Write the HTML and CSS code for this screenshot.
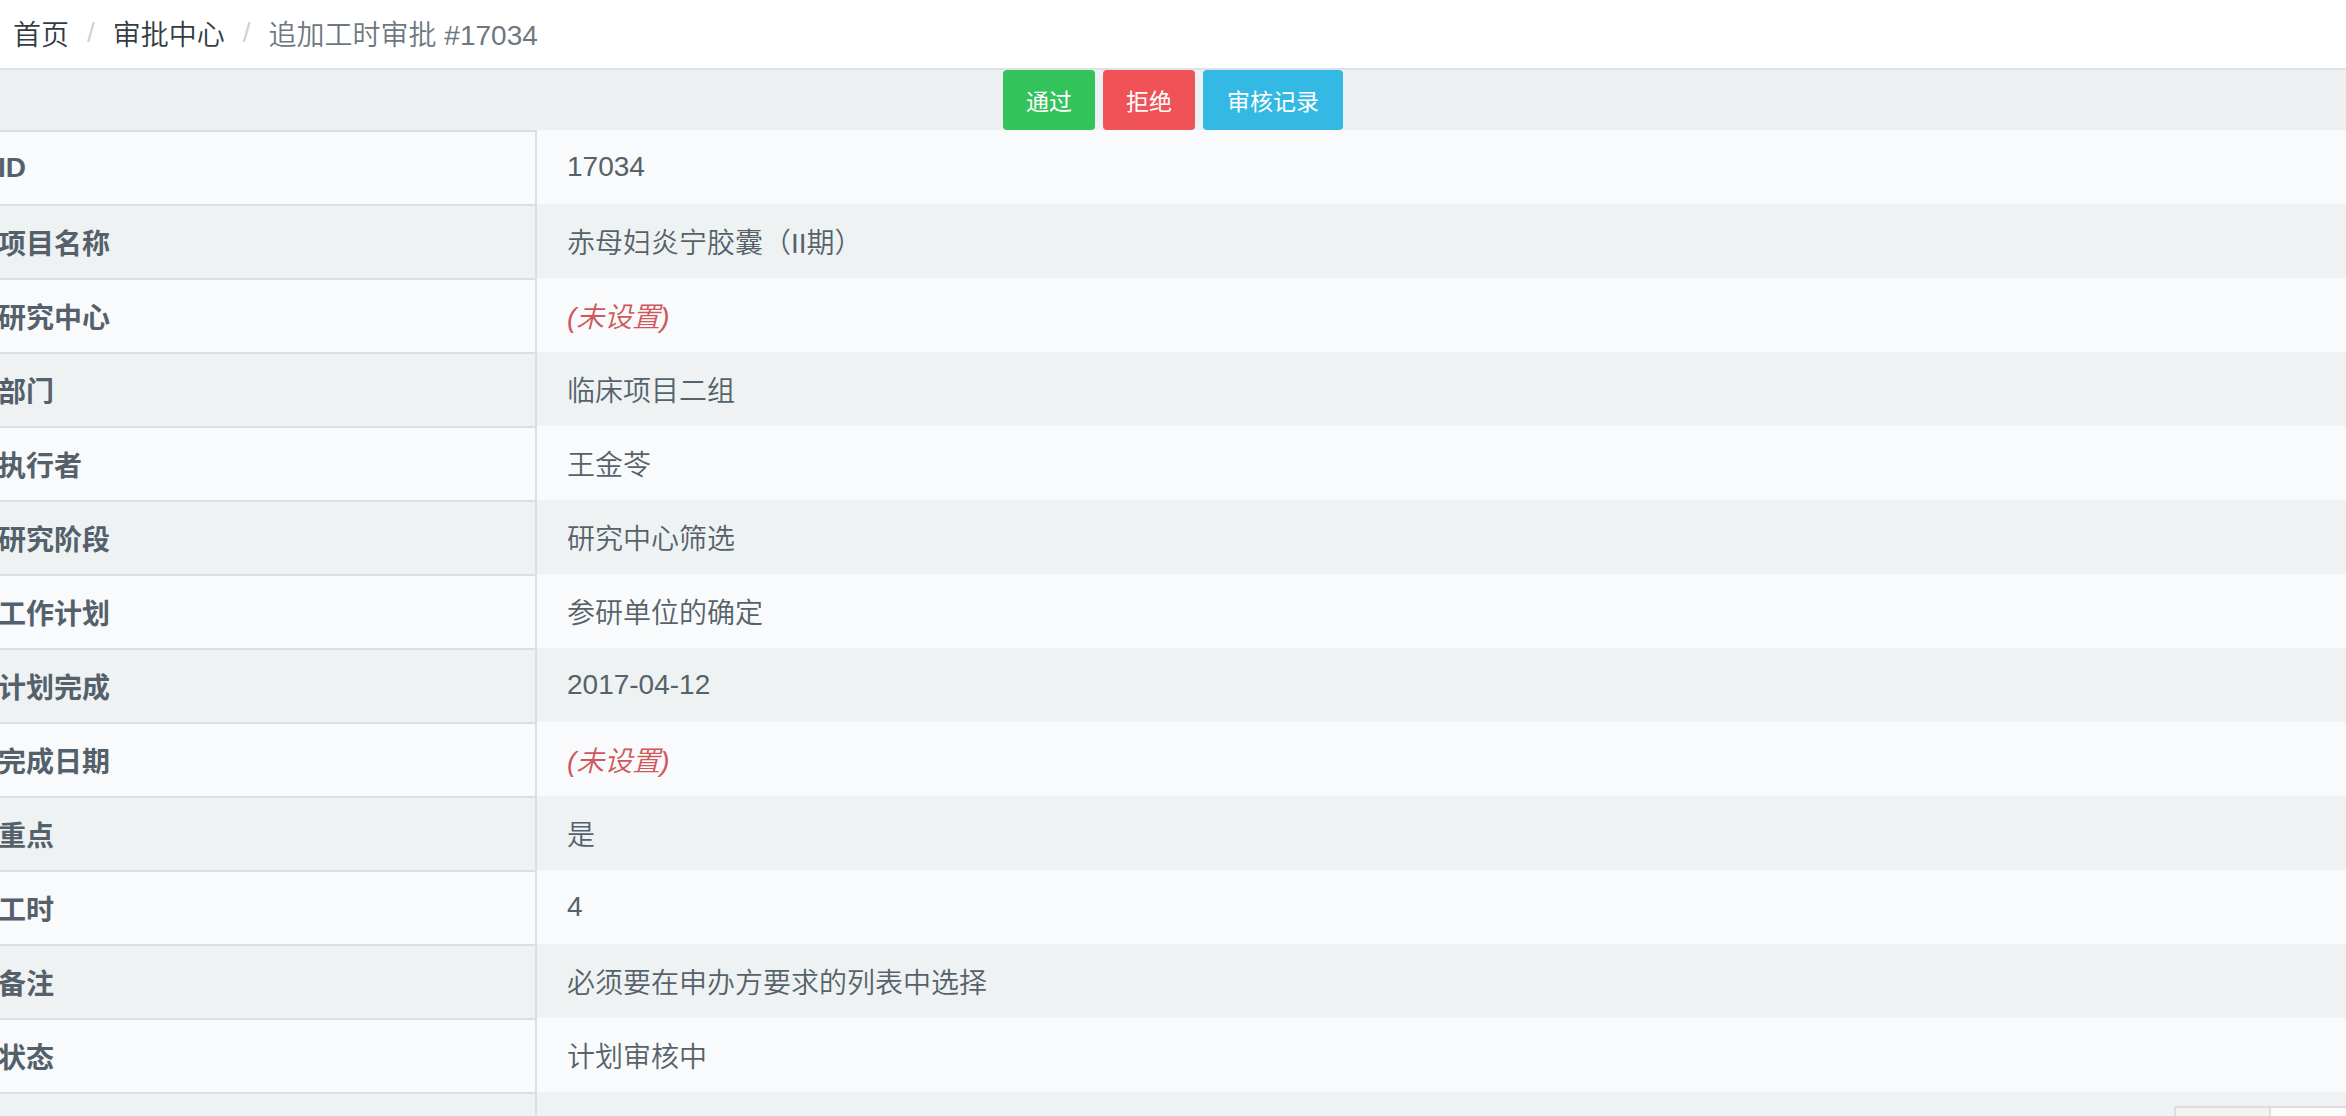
FILE: index.html
```html
<!DOCTYPE html>
<html lang="zh-CN">
<head>
<meta charset="utf-8">
<title>追加工时审批 #17034</title>
<link rel="stylesheet" href="styles.css">
</head>
<body>
<header class="topbar">
  <nav class="breadcrumb">
    <a class="crumb" href="#">首页</a>
    <span class="sep">/</span>
    <a class="crumb" href="#">审批中心</a>
    <span class="sep">/</span>
    <span class="crumb active">追加工时审批 #17034</span>
  </nav>
</header>
<div class="toolbar">
  <button class="btn btn-success">通过</button>
  <button class="btn btn-danger">拒绝</button>
  <button class="btn btn-info">审核记录</button>
</div>
<div class="detail">
  <div class="row"><div class="th">ID</div><div class="td">17034</div></div>
  <div class="row"><div class="th">项目名称</div><div class="td">赤母妇炎宁胶囊（II期）</div></div>
  <div class="row"><div class="th">研究中心</div><div class="td"><span class="unset">(未设置)</span></div></div>
  <div class="row"><div class="th">部门</div><div class="td">临床项目二组</div></div>
  <div class="row"><div class="th">执行者</div><div class="td">王金苓</div></div>
  <div class="row"><div class="th">研究阶段</div><div class="td">研究中心筛选</div></div>
  <div class="row"><div class="th">工作计划</div><div class="td">参研单位的确定</div></div>
  <div class="row"><div class="th">计划完成</div><div class="td">2017-04-12</div></div>
  <div class="row"><div class="th">完成日期</div><div class="td"><span class="unset">(未设置)</span></div></div>
  <div class="row"><div class="th">重点</div><div class="td">是</div></div>
  <div class="row"><div class="th">工时</div><div class="td">4</div></div>
  <div class="row"><div class="th">备注</div><div class="td">必须要在申办方要求的列表中选择</div></div>
  <div class="row"><div class="th">状态</div><div class="td">计划审核中</div></div>
  <div class="row last"><div class="th"></div><div class="td tail"><span class="box box-gray"></span><span class="box box-white"></span></div></div>
</div>
</body>
</html>
```
FILE: styles.css
```css
html, body {
  margin: 0;
  padding: 0;
  background: #ffffff;
  overflow: hidden;
  height: 1116px;
}
body {
  font-family: "Liberation Sans", "Noto Sans CJK SC", sans-serif;
  font-size: 28px;
  color: #56626a;
}
.topbar {
  height: 68px;
  background: #ffffff;
  border-bottom: 2px solid #dce2e5;
  display: flex;
  align-items: center;
}
.breadcrumb {
  display: flex;
  align-items: center;
  padding-left: 13px;
  margin-top: -2px;
  font-weight: 350;
}
.crumb {
  color: #333c43;
  text-decoration: none;
}
.crumb.active {
  color: #6e7880;
}
.sep {
  color: #cfd3d6;
  padding: 0 18px;
}
.toolbar {
  height: 60px;
  background: #edf1f2;
  display: flex;
  justify-content: center;
  gap: 8px;
}
.btn {
  height: 60px;
  border: none;
  border-radius: 4px;
  color: #ffffff;
  font-family: "Liberation Sans", "Noto Sans CJK SC", sans-serif;
  font-size: 23px;
  padding: 0 23px;
  cursor: pointer;
}
.btn-success { background: #34c25a; width: 92px; }
.btn-danger { background: #ef5357; width: 92px; }
.btn-info { background: #33b9e3; width: 140px; }
.detail {
  margin-left: -32px;
}
.row {
  display: grid;
  grid-template-columns: 569px 1fr;
  background: #f9fafb;
}
.row:nth-child(even) {
  background: #eff2f3;
}
.th {
  height: 72px;
  border-top: 2px solid #dcdedf;
  border-right: 2px solid #dcdedf;
  padding-left: 30px;
  display: flex;
  align-items: center;
  font-weight: bold;
  color: #54616a;
}
.td {
  height: 74px;
  padding-left: 30px;
  display: flex;
  align-items: center;
  color: #56626a;
  font-weight: 350;
}
.unset {
  color: #d0575b;
  font-style: italic;
}
.row.last .th { height: 100px; }
.tail {
  align-items: flex-start;
  justify-content: flex-end;
  padding-top: 14px;
  height: 86px;
  overflow: hidden;
}
.box {
  display: block;
  height: 40px;
  box-sizing: border-box;
  border: 2px solid #dddddd;
}
.box-gray {
  width: 97px;
  background: #f3f3f3;
}
.box-white {
  width: 90px;
  background: #fcfcfc;
  border-left: none;
  margin-right: -15px;
}
```
